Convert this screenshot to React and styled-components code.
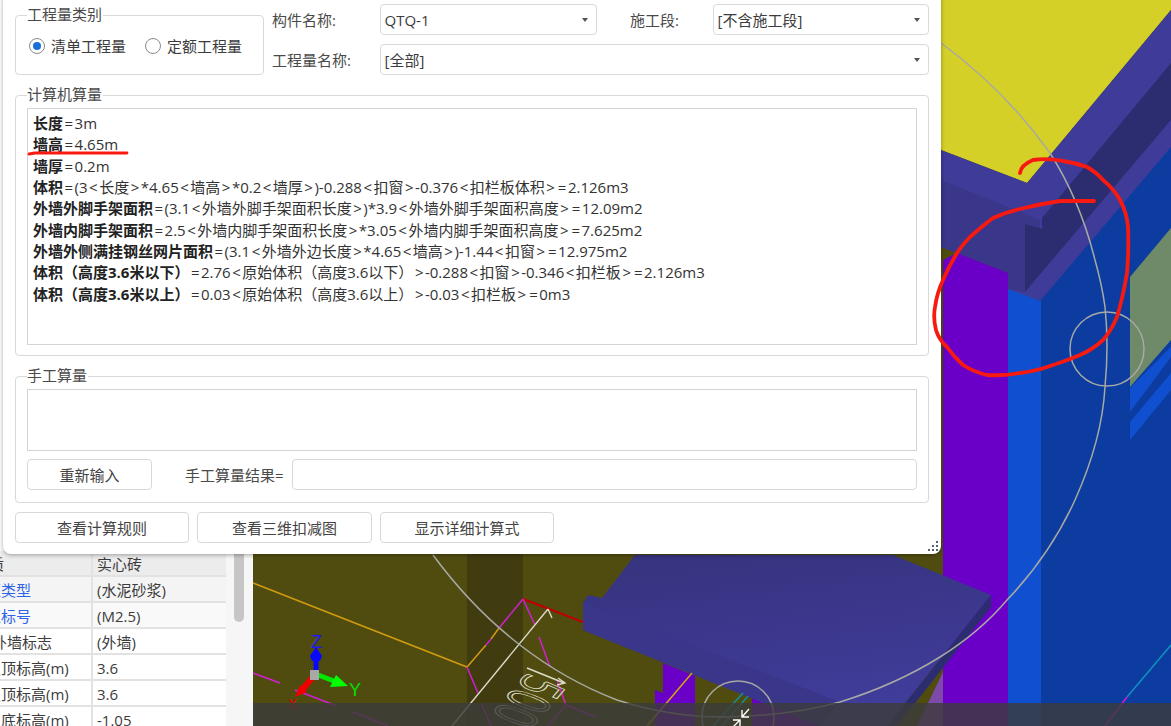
import styled, { createGlobalStyle } from "styled-components";

const calcLines = [
  ["长度", "=3m"],
  ["墙高", "=4.65m"],
  ["墙厚", "=0.2m"],
  ["体积", "=(3<长度>*4.65<墙高>*0.2<墙厚>)-0.288<扣窗>-0.376<扣栏板体积>=2.126m3"],
  ["外墙外脚手架面积", "=(3.1<外墙外脚手架面积长度>)*3.9<外墙外脚手架面积高度>=12.09m2"],
  ["外墙内脚手架面积", "=2.5<外墙内脚手架面积长度>*3.05<外墙内脚手架面积高度>=7.625m2"],
  ["外墙外侧满挂钢丝网片面积", "=(3.1<外墙外边长度>*4.65<墙高>)-1.44<扣窗>=12.975m2"],
  ["体积（高度3.6米以下）", "=2.76<原始体积（高度3.6以下）>-0.288<扣窗>-0.346<扣栏板>=2.126m3"],
  ["体积（高度3.6米以上）", "=0.03<原始体积（高度3.6以上）>-0.03<扣栏板>=0m3"],
];

const propRows = [
  { name: "材质", value: "实心砖", indent: -26, shade: "#ececec" },
  { name: "砂浆类型", value: "(水泥砂浆)", indent: -29, link: true, shade: "#f4f4f4" },
  { name: "砂浆标号", value: "(M2.5)", indent: -29, link: true, shade: "#f9f9f9" },
  { name: "内外墙标志", value: "(外墙)", indent: -23 },
  { name: "起点顶标高(m)", value: "3.6", indent: -29 },
  { name: "终点顶标高(m)", value: "3.6", indent: -29 },
  { name: "起点底标高(m)", value: "-1.05", indent: -29 },
];

const GlobalStyle = createGlobalStyle`
  * {
    box-sizing: border-box;
  }
  html, body {
    margin: 0;
    height: 100%;
    overflow: hidden;
  }
  body {
    font-family: "Open Sans", "Noto Sans CJK SC", sans-serif;
    font-size: 15px;
    color: #3c3c3c;
  }
`;

const Page = styled.div`
  position: relative;
  display: flex;
  width: 1171px;
  height: 726px;
  overflow: hidden;
  background: #f2f2f2;
`;

/* property list behind the dialog */
const PropPanel = styled.div`
  display: flex;
  width: 253px;
  height: 726px;
  flex: none;
`;

const PropTable = styled.div`
  width: 226px;
  padding-top: 551px;
  background: #fff;
`;

const PropRow = styled.div`
  display: grid;
  grid-template-columns: 93px 1fr;
  height: 26px;
  background: ${(p) => p.$shade || "#fff"};
  border-bottom: 2px solid #e2e2e2;
`;

const PropName = styled.div`
  overflow: hidden;
  white-space: nowrap;
  line-height: 26px;
  text-indent: ${(p) => p.$indent}px;
  color: ${(p) => (p.$link ? "#2f63e6" : "#3c3c3c")};
  border-right: 2px solid #e2e2e2;
`;

const PropValue = styled.div`
  padding-left: 4px;
  line-height: 26px;
  white-space: nowrap;
`;

const ScrollTrack = styled.div`
  width: 27px;
  padding: 540px 0 0 8px;
  background: #f6f6f6;
`;

const ScrollThumb = styled.div`
  width: 10px;
  height: 82px;
  border-radius: 5px;
  background: #c6c6c6;
`;

const Viewport = styled.div`
  flex: 1;
  height: 726px;
`;

const SceneSvg = styled.svg`
  display: block;
  width: 918px;
  height: 726px;
`;

/* floating dialog */
const Dialog = styled.div`
  position: absolute;
  left: 3px;
  top: -8px;
  width: 938px;
  height: 562px;
  padding: 12px 12px 0;
  background: #fff;
  border-radius: 8px;
  box-shadow: 0 1px 4px rgba(0, 0, 0, 0.35);
`;

const TopRow = styled.div`
  display: flex;
  align-items: flex-end;
  gap: 8px;
  height: 71px;
`;

const Group = styled.div`
  position: relative;
  width: ${(p) => p.$width || "100%"};
  height: ${(p) => p.$height}px;
  margin-top: ${(p) => p.$top || 0}px;
  padding: ${(p) => p.$pad || "12px"};
  flex: none;
  border: 1px solid #d9d9d9;
  border-radius: 4px;
`;

const GroupTitle = styled.span`
  position: absolute;
  left: 11px;
  top: -12px;
  padding-right: 1px;
  line-height: 20px;
  background: #fff;
  color: #4a4a4a;
`;

const RadioRow = styled.div`
  display: flex;
  align-items: center;
  gap: 19px;
  padding-top: 8px;
  margin-left: 1px;
`;

const RadioLabel = styled.label`
  display: flex;
  align-items: center;
  gap: 6px;
  line-height: 20px;
  white-space: nowrap;
`;

const RadioDot = styled.span`
  display: flex;
  align-items: center;
  justify-content: center;
  width: 16px;
  height: 16px;
  border-radius: 50%;
  border: 1px solid #8a8a8a;

  &::after {
    content: "";
    width: 8px;
    height: 8px;
    border-radius: 50%;
    background: ${(p) => (p.$checked ? "#1a6fd6" : "transparent")};
  }
`;

const Fields = styled.div`
  display: grid;
  grid-template-columns: 108px 217px 116px 216px;
  grid-auto-rows: 31px;
  row-gap: 9px;
  width: 657px;
  align-items: center;
`;

const FieldLabel = styled.span`
  padding-left: ${(p) => p.$pad || 0}px;
  color: #4a4a4a;
  white-space: nowrap;
`;

const Select = styled.div`
  display: flex;
  align-items: center;
  justify-content: space-between;
  height: 31px;
  padding: 0 8px 0 3.5px;
  grid-column: ${(p) => (p.$wide ? "2 / 5" : "auto")};
  border: 1px solid #dadada;
  border-radius: 4px;
  background: #fff;

  &::after {
    content: "";
    border-left: 3px solid transparent;
    border-right: 3px solid transparent;
    border-top: 4px solid #555;
  }
`;

const TextBox = styled.div`
  height: ${(p) => p.$height}px;
  border: 1px solid #d4d4d4;
  background: #fff;
`;

const CalcText = styled(TextBox)`
  padding: 4px 5px;
  font-size: 15px;
  line-height: 21.33px;
  color: #333;
  white-space: nowrap;

  b {
    font-weight: 700;
    color: #222;
  }
`;

const Symbol = styled.span`
  padding: 0 1.5px;
`;

const ManualRow = styled.div`
  display: flex;
  align-items: center;
  margin-top: 8px;
`;

const Button = styled.button`
  width: ${(p) => p.$width}px;
  height: 31px;
  padding: 0 0 1px;
  flex: none;
  font: inherit;
  color: #444;
  background: #fff;
  border: 1px solid #d8d8d8;
  border-radius: 4px;
`;

const ResultLabel = styled.span`
  margin: 0 8px 0 33px;
  color: #4a4a4a;
  white-space: nowrap;
`;

const ResultInput = styled.div`
  flex: 1;
  height: 31px;
  border: 1px solid #d8d8d8;
  border-radius: 4px;
`;

const ButtonRow = styled.div`
  display: flex;
  gap: 8px;
  margin-top: 9px;
`;

const Grip = styled.svg`
  position: absolute;
  right: 2px;
  bottom: 2px;
  width: 11px;
  height: 11px;
`;

const Annotations = styled.svg`
  position: absolute;
  left: 0;
  top: 0;
  width: 1171px;
  height: 726px;
  pointer-events: none;
`;

// the < > = signs sit wider in the original font
const spaced = (text) =>
  text.split(/([<>=])/).map((part, i) =>
    i % 2 ? <Symbol key={i}>{part}</Symbol> : part
  );

const Scene = () => (
  <SceneSvg viewBox="253 0 918 726">
    <defs>
      <linearGradient id="slab" x1="0" y1="0" x2="0.3" y2="1">
        <stop offset="0" stopColor="#36337e" />
        <stop offset="1" stopColor="#403c9a" />
      </linearGradient>
    </defs>
    <rect x="253" y="0" width="918" height="726" fill="#504c10" />
    <rect x="467" y="540" width="56" height="186" fill="#403c10" />

    {/* upper right building */}
    <polygon points="941,0 1171,0 1171,10 1027,183 941,150" fill="#d4d028" />
    <polygon points="941,150 1027,183 1171,10 1171,160 1041,301 1008,290 1008,273 957,253 941,247" fill="#3f3b98" />
    <polygon points="941,180 1040,220 1040,229 1025,224 1025,292 1008,289 1008,273 957,253 941,247" fill="#3a3689" />
    <polygon points="1171,63 1042,218 1042,229 1025,224 1025,292 1171,120" fill="#2c2d70" />
    <polygon points="1041,300 1171,147 1171,726 1041,726" fill="#0c3ca0" />
    <polygon points="1008,289 1041,301 1041,726 1008,726" fill="#1050d0" />
    <polygon points="943,260 957,253 1008,273 1008,726 943,726" fill="#6a00c8" />
    <polygon points="1130,277 1171,228 1171,340 1130,387" fill="#6f8a68" />
    <polygon points="1130,388 1171,347 1171,357 1130,412" fill="#1050d0" />
    <polygon points="1130,422 1171,373 1171,390 1130,440" fill="#1050d0" />
    <polyline points="1171,645 1127,697" fill="none" stroke="#1090c0" strokeWidth="1.5" />
    <polyline points="1127,697 1105,726" fill="none" stroke="#d020d0" strokeWidth="1.5" />

    {/* slab and small column */}
    <polygon points="663,663 695,676 695,726 655,726 655,690 663,693" fill="#6a00c8" />
    <polygon points="752,698 820,726 752,726" fill="#6a00c8" />
    <polygon points="917,726 943,672 943,726" fill="#7e4aa8" />
    <polygon points="635,555 893,555 991,595 887,726 820,726 583,630 583,603 588,595 602,598" fill="url(#slab)" />
    <polygon points="583,603 840,702 820,726 583,630" fill="#3a3689" />
    <polygon points="991,595 991,607 897,726 887,726" fill="#2c2d70" />

    {/* floor lines */}
    <g fill="none" strokeWidth="1.5">
      <polyline points="253,583 467,667 486,645" stroke="#d09a10" />
      <polyline points="491,639 499,628" stroke="#d09a10" />
      <polyline points="486,645 491,639" stroke="#d020d0" />
      <polyline points="499,628 523,599" stroke="#d020d0" />
      <polyline points="523,599 583,622" stroke="#c00000" strokeWidth="2" />
      <polyline points="523,599 535,625" stroke="#d020d0" />
      <polyline points="539,637 550,667" stroke="#d020d0" />
      <polyline points="557,680 566,705" stroke="#d020d0" />
      <polyline points="467,667 478,693" stroke="#d020d0" />
      <polyline points="253,673 280,683" stroke="#d020d0" />
      <polyline points="295,690 337,706" stroke="#d020d0" />
      <polyline points="353,712 388,726" stroke="#d020d0" />
      <polyline points="566,705 548,726" stroke="#d020d0" />
      <polyline points="566,705 595,717" stroke="#d020d0" />
      <polyline points="482,705 491,726" stroke="#d020d0" />
      <polyline points="692,673 647,726" stroke="#d0a810" />
      <polyline points="743,693 713,726" stroke="#1090a0" />
      <polyline points="748,696 722,726" stroke="#1090a0" />
    </g>

    {/* dimension */}
    <g fill="none" stroke="#dcdcc8" strokeWidth="1.4">
      <polyline points="452,726 548,609" />
      <polyline points="548,609 552,618" />
      <polyline points="527,668 564,683" />
      <polyline points="558,678 565,683 557,685" />
    </g>
    <text
      transform="matrix(-1.36,1.59,-3.4,-1.3,528,672)"
      fontFamily="Open Sans, sans-serif"
      fontSize="16"
      fill="none"
      stroke="#dcdcc8"
      strokeWidth="0.35"
    >
      500
    </text>

    {/* big section arc */}
    <g fill="none" stroke="#a8a8a4" strokeWidth="1.5">
      <path d="M433 555 Q472 608 520 645 Q565 680 617 700 Q670 717 723 717 Q790 716 840 702 Q895 685 940 657 Q980 632 1007 600 Q1050 555 1075 500 Q1102 440 1105 387 Q1109 345 1105 307 Q1102 285 1095 260 Q1080 200 1050 153 Q1005 90 941 43" />
      <circle cx="1107" cy="349" r="37" />
      <circle cx="738" cy="717" r="36" />
    </g>

    {/* axis gizmo */}
    <path d="M316 672 V654" stroke="#0808ff" strokeWidth="5" />
    <polygon points="316,647 322,656 320,661 312,661 310,656" fill="#0808ff" />
    <path d="M318 675 L334 681" stroke="#00e800" strokeWidth="5" />
    <polygon points="348,686 330,687 336,675" fill="#00ff00" />
    <path d="M313 677 L302 690" stroke="#f00000" strokeWidth="6" />
    <polygon points="295,697 300,685 307,692" fill="#f00000" />
    <rect x="310" y="670" width="9" height="10" fill="#a8a8a8" />
    <text x="311" y="648" fontFamily="Liberation Sans, sans-serif" fontSize="18" fill="#1a1aff">Z</text>
    <text x="349" y="696" fontFamily="Liberation Sans, sans-serif" fontSize="18" fill="#00e000">Y</text>
    <text x="288" y="709" fontFamily="Liberation Sans, sans-serif" fontSize="14" fill="#e00000">X</text>

    {/* bottom status band */}
    <rect x="253" y="703" width="918" height="23" fill="#3c3c3c" fillOpacity="0.82" />
    <path d="M742 710 V717 H749 M742 717 L749 709 M733 720 H740 V726 M740 720 L733 727" fill="none" stroke="#fff" strokeWidth="1.4" />
  </SceneSvg>
);

const App = () => {
  return (
    <Page>
      <GlobalStyle />
      <PropPanel>
        <PropTable>
          {propRows.map((r) => (
            <PropRow key={r.name} $shade={r.shade}>
              <PropName $indent={r.indent} $link={r.link}>{r.name}</PropName>
              <PropValue>{r.value}</PropValue>
            </PropRow>
          ))}
        </PropTable>
        <ScrollTrack>
          <ScrollThumb />
        </ScrollTrack>
      </PropPanel>
      <Viewport>
        <Scene />
      </Viewport>

      <Dialog>
        <TopRow>
          <Group $width="249px" $height={60}>
            <GroupTitle>工程量类别</GroupTitle>
            <RadioRow>
              <RadioLabel><RadioDot $checked />清单工程量</RadioLabel>
              <RadioLabel><RadioDot />定额工程量</RadioLabel>
            </RadioRow>
          </Group>
          <Fields>
            <FieldLabel>构件名称:</FieldLabel>
            <Select>QTQ-1</Select>
            <FieldLabel $pad={33}>施工段:</FieldLabel>
            <Select>[不含施工段]</Select>
            <FieldLabel>工程量名称:</FieldLabel>
            <Select $wide>[全部]</Select>
          </Fields>
        </TopRow>

        <Group $height={261} $top={20} $pad="12px 11px 10px">
          <GroupTitle>计算机算量</GroupTitle>
          <CalcText $height={237}>
            {calcLines.map(([name, rest]) => (
              <div key={name}><b>{name}</b>{spaced(rest)}</div>
            ))}
          </CalcText>
        </Group>

        <Group $height={127} $top={20} $pad="12px 11px 0">
          <GroupTitle>手工算量</GroupTitle>
          <TextBox $height={62} />
          <ManualRow>
            <Button $width={125}>重新输入</Button>
            <ResultLabel>手工算量结果=</ResultLabel>
            <ResultInput />
          </ManualRow>
        </Group>

        <ButtonRow>
          <Button $width={174}>查看计算规则</Button>
          <Button $width={175}>查看三维扣减图</Button>
          <Button $width={174}>显示详细计算式</Button>
        </ButtonRow>

        <Grip viewBox="0 0 11 11">
          <g fill="#5a6068">
            <rect x="8" y="0" width="2" height="2" />
            <rect x="4" y="4" width="2" height="2" />
            <rect x="8" y="4" width="2" height="2" />
            <rect x="0" y="8" width="2" height="2" />
            <rect x="4" y="8" width="2" height="2" />
            <rect x="8" y="8" width="2" height="2" />
          </g>
        </Grip>
      </Dialog>

      {/* hand drawn red marks on top of the screenshot */}
      <Annotations viewBox="0 0 1171 726">
        <g fill="none" stroke="#f81a10" strokeWidth="3.8" strokeLinecap="round" strokeLinejoin="round">
          <path d="M29 154 L35 153 H127" strokeWidth="2.8" />
          <path d="M1020 173 Q1021 165 1033 160 Q1048 158 1063 161 Q1076 163 1087 167 Q1096 172 1103 180 Q1114 189 1120 200 Q1127 213 1128 227 Q1129 250 1127 273 Q1123 297 1117 317 Q1111 331 1103 340 Q1092 350 1080 355 Q1066 361 1053 365 Q1037 371 1020 373 Q1003 376 987 375 Q974 372 963 365 Q954 357 947 347 Q939 340 936 330 Q933 318 935 307 Q937 293 943 280 Q949 266 957 253 Q962 245 970 237 Q981 227 993 218 Q1006 212 1020 209 Q1040 204 1060 201 H1094" />
        </g>
      </Annotations>
    </Page>
  );
};

export default App;
